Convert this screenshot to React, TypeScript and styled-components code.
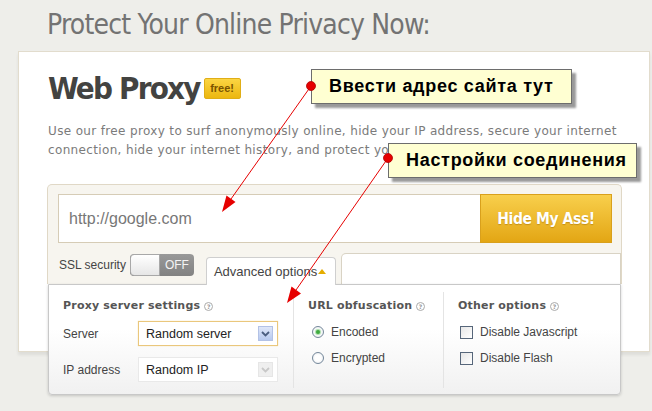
import styled, { createGlobalStyle } from 'styled-components'

const GlobalStyle = createGlobalStyle`
  html, body {
    margin: 0;
    padding: 0;
    background: #eeeeea;
  }
  * {
    box-sizing: border-box;
  }
`

const Page = styled.div`
  position: relative;
  width: 652px;
  height: 411px;
  overflow: hidden;
  background: #eeeeea;
  font-family: 'Liberation Sans', Arial, sans-serif;
`

const Title = styled.h1`
  margin: 0;
  padding: 8px 0 0 47px;
  height: 42px;
  font-family: 'DejaVu Sans Condensed', sans-serif;
  font-weight: normal;
  font-size: 28px;
  letter-spacing: -0.8px;
  line-height: 34px;
  color: #737373;
  white-space: nowrap;
`

const Card = styled.div`
  margin: 9px 0 0 18px;
  width: 632px;
  height: 301px;
  padding: 0 0 0 28px;
  background: #fff;
  border: 1px solid #e2dccd;
  box-shadow: 0 3px 3px rgba(0, 0, 0, 0.07);
`

const Heading = styled.div`
  display: flex;
  align-items: center;
  margin-top: 16px;
  height: 40px;
`

const HeadingText = styled.h2`
  margin: 0 0 0 1px;
  font-family: 'DejaVu Sans Condensed', sans-serif;
  font-weight: bold;
  font-size: 31px;
  letter-spacing: -1.8px;
  line-height: 40px;
  color: #434341;
`

const Badge = styled.span`
  margin-left: 4px;
  width: 37px;
  height: 21px;
  display: flex;
  align-items: center;
  justify-content: center;
  background: linear-gradient(#fbd543, #ecb710);
  border: 1px solid #e0ae17;
  border-radius: 2px;
  color: #7a5400;
  font-size: 11px;
  font-weight: bold;
`

const Intro = styled.p`
  margin: 14px 0 0 1px;
  font-family: 'DejaVu Sans', sans-serif;
  font-size: 12px;
  letter-spacing: 0.35px;
  line-height: 19px;
  color: #7b7b7b;
  white-space: nowrap;
`

const Form = styled.div`
  margin-top: 24px;
  width: 575px;
  padding: 9px 9px 0 10px;
  background: #f7f5ef;
  border: 1px solid #e0d8c6;
  border-bottom: none;
  border-radius: 5px 5px 0 0;
`

const UrlRow = styled.div`
  display: flex;
  height: 49px;
`

const UrlInput = styled.div`
  flex: 1;
  display: flex;
  align-items: center;
  padding-left: 10px;
  background: #fff;
  border: 1px solid #d6ccb6;
  border-right: none;
  font-size: 16px;
  color: #777;
`

const Submit = styled.div`
  width: 132px;
  display: flex;
  align-items: center;
  justify-content: center;
  background: linear-gradient(#f8cf4c, #e3a614);
  border: 1px solid #d9a01c;
  color: #fff;
  font-family: 'DejaVu Sans Condensed', sans-serif;
  font-weight: bold;
  font-size: 15.5px;
  letter-spacing: -0.4px;
  text-shadow: 0 1px 1px rgba(150, 100, 0, 0.45);
`

const TabRow = styled.div`
  display: flex;
  align-items: flex-start;
  height: 41px;
`

const Ssl = styled.div`
  display: flex;
  align-items: center;
  margin: 11px 0 0 1px;
  height: 22px;
  font-size: 12px;
  color: #444;
`

const Toggle = styled.div`
  margin-left: 4px;
  width: 64px;
  height: 22px;
  display: flex;
  background: linear-gradient(#999, #828282);
  border-radius: 4px;
  overflow: hidden;
`

const Knob = styled.div`
  width: 30px;
  background: linear-gradient(#fff, #e6e6e6);
  border: 1px solid #a8a8a8;
  border-radius: 4px 0 0 4px;
`

const ToggleState = styled.div`
  flex: 1;
  display: flex;
  align-items: center;
  justify-content: center;
  color: #f4f4f4;
  font-size: 12px;
`

const Tab = styled.div`
  position: relative;
  z-index: 2;
  margin: 14px 0 -1px 12px;
  width: 130px;
  height: 28px;
  display: flex;
  align-items: center;
  padding-left: 7px;
  background: #fff;
  border: 1px solid #cfcfcf;
  border-bottom: none;
  border-radius: 4px 4px 0 0;
  font-size: 13px;
  color: #444;
`

const Caret = styled.span`
  margin-left: 1px;
  width: 0;
  height: 0;
  border-left: 4px solid transparent;
  border-right: 4px solid transparent;
  border-bottom: 5px solid #e5ad00;
`

const BlankTab = styled.div`
  flex: 1;
  margin: 10px -9px 0 5px;
  height: 31px;
  background: #fff;
  border: 1px solid #d9d3c4;
  border-bottom: none;
  border-radius: 5px 0 0 0;
`

const Panel = styled.div`
  position: relative;
  z-index: 1;
  margin-left: 1px;
  width: 573px;
  height: 111px;
  display: grid;
  grid-template-columns: 244px 150px 1fr;
  background: linear-gradient(#fff 40%, #f1f1f1);
  border: 1px solid #c8c8c8;
  border-radius: 0 0 4px 4px;
  box-shadow: 0 1px 3px rgba(0, 0, 0, 0.18);
`

const Column = styled.div<{ $divider?: boolean }>`
  margin: 7px 0 6px;
  padding: 6px 0 0 14px;
  border-left: ${p => (p.$divider ? '1px solid #e4e4e4' : 'none')};
  font-size: 12px;
  color: #444;
`

const ColumnTitle = styled.div`
  display: flex;
  align-items: center;
  height: 14px;
  font-family: 'DejaVu Sans', sans-serif;
  font-weight: bold;
  font-size: 11px;
  letter-spacing: 0.2px;
  color: #555;
`

const Help = styled.span`
  margin: 2px 0 0 4px;
  width: 9px;
  height: 9px;
  display: flex;
  align-items: center;
  justify-content: center;
  border: 1px solid #aaa;
  border-radius: 50%;
  font-size: 6px;
  font-weight: bold;
  color: #999;
`

const Fields = styled.div`
  margin-top: 9px;
  display: grid;
  grid-template-columns: 75px 140px;
  row-gap: 11px;
  align-items: center;
`

const Select = styled.div<{ $active?: boolean }>`
  height: 25px;
  display: flex;
  align-items: center;
  justify-content: space-between;
  padding: 0 4px 0 7px;
  background: #fff;
  border: 1px solid ${p => (p.$active ? '#eac77c' : '#e9e9e9')};
  box-shadow: ${p => (p.$active ? '0 0 1px #f0d9a0' : 'none')};
  font-size: 12.5px;
  color: #222;
`

const SelectArrow = styled.span<{ $active?: boolean }>`
  width: 15px;
  height: 15px;
  display: flex;
  align-items: center;
  justify-content: center;
  background: ${p => (p.$active ? 'linear-gradient(#dfe7f9, #b7c9ef)' : '#efefef')};
  border: 1px solid ${p => (p.$active ? '#b3c2e6' : '#e6e6e6')};
  color: ${p => (p.$active ? '#4a5d80' : '#c8c8c8')};
`

const Choices = styled.div`
  margin-top: 10px;
  display: flex;
  flex-direction: column;
  gap: 6px;
`

const Choice = styled.label<{ $indent: number }>`
  display: flex;
  align-items: center;
  gap: 7px;
  height: 20px;
  padding-left: ${p => p.$indent}px;
`

const Radio = styled.span<{ $checked?: boolean }>`
  width: 12px;
  height: 12px;
  display: flex;
  align-items: center;
  justify-content: center;
  border: 1px solid #74879a;
  border-radius: 50%;
  background: radial-gradient(#fff 40%, #e4e8ec);
  &::after {
    content: '';
    width: 4px;
    height: 4px;
    border-radius: 50%;
    background: ${p => (p.$checked ? '#3faa3f' : 'transparent')};
    box-shadow: ${p => (p.$checked ? '0 0 1px 1px #a5dba5' : 'none')};
  }
`

const Checkbox = styled.span`
  width: 13px;
  height: 13px;
  border: 1px solid #56667a;
  background: linear-gradient(135deg, #e6e6e6, #fff);
`

const Callout = styled.div<{ $x: number; $y: number; $w: number }>`
  position: absolute;
  z-index: 10;
  left: ${p => p.$x}px;
  top: ${p => p.$y}px;
  width: ${p => p.$w}px;
  height: 35px;
  display: flex;
  align-items: center;
  padding-left: 17px;
  background: #ffffd2;
  border: 1px solid #6d6d6d;
  box-shadow: 4px 4px 2px rgba(0, 0, 0, 0.4);
  font-family: 'Liberation Sans', Arial, sans-serif;
  font-weight: bold;
  font-size: 18px;
  letter-spacing: 0.7px;
  color: #000;
  white-space: nowrap;
`

const Pointers = styled.svg`
  position: absolute;
  z-index: 11;
  left: 0;
  top: 0;
  pointer-events: none;
`

const Chevron = () => (
  <svg width="9" height="6" viewBox="0 0 9 6">
    <path d="M1 1l3.5 3.5L8 1" fill="none" stroke="currentColor" strokeWidth="1.8" />
  </svg>
)

export default function App() {
  return (
    <Page>
      <GlobalStyle />
      <Title>Protect Your Online Privacy Now:</Title>
      <Card>
        <Heading>
          <HeadingText>Web Proxy</HeadingText>
          <Badge>free!</Badge>
        </Heading>
        <Intro>
          Use our free proxy to surf anonymously online, hide your IP address, secure your internet
          <br />
          connection, hide your internet history, and protect your
        </Intro>
        <Form>
          <UrlRow>
            <UrlInput>http://google.com</UrlInput>
            <Submit>Hide My Ass!</Submit>
          </UrlRow>
          <TabRow>
            <Ssl>
              SSL security
              <Toggle>
                <Knob />
                <ToggleState>OFF</ToggleState>
              </Toggle>
            </Ssl>
            <Tab>
              Advanced options
              <Caret />
            </Tab>
            <BlankTab />
          </TabRow>
        </Form>
        <Panel>
          <Column>
            <ColumnTitle>
              Proxy server settings <Help>?</Help>
            </ColumnTitle>
            <Fields>
              <span>Server</span>
              <Select $active>
                Random server
                <SelectArrow $active>
                  <Chevron />
                </SelectArrow>
              </Select>
              <span>IP address</span>
              <Select>
                Random IP
                <SelectArrow>
                  <Chevron />
                </SelectArrow>
              </Select>
            </Fields>
          </Column>
          <Column $divider>
            <ColumnTitle>
              URL obfuscation <Help>?</Help>
            </ColumnTitle>
            <Choices>
              <Choice $indent={4}>
                <Radio $checked />
                Encoded
              </Choice>
              <Choice $indent={4}>
                <Radio />
                Encrypted
              </Choice>
            </Choices>
          </Column>
          <Column $divider>
            <ColumnTitle>
              Other options <Help>?</Help>
            </ColumnTitle>
            <Choices>
              <Choice $indent={2}>
                <Checkbox />
                Disable Javascript
              </Choice>
              <Choice $indent={2}>
                <Checkbox />
                Disable Flash
              </Choice>
            </Choices>
          </Column>
        </Panel>
      </Card>

      <Callout $x={311} $y={69} $w={261}>Ввести адрес сайта тут</Callout>
      <Callout $x={388} $y={143} $w={249}>Настройки соединения</Callout>

      <Pointers width="652" height="411" viewBox="0 0 652 411">
        <g fill="#e60000" stroke="#e60000">
          <line x1="311" y1="86" x2="231" y2="199" strokeWidth="1" />
          <polygon points="222,212 235.5,202 226.5,195.5" stroke="none" />
          <circle cx="311" cy="86" r="4.5" stroke="#b00000" strokeWidth="0.8" />
          <line x1="388" y1="158" x2="296" y2="290" strokeWidth="1" />
          <polygon points="287,303 301,293.5 291.5,286.5" stroke="none" />
          <circle cx="388" cy="158" r="4.5" stroke="#b00000" strokeWidth="0.8" />
        </g>
      </Pointers>
    </Page>
  )
}
